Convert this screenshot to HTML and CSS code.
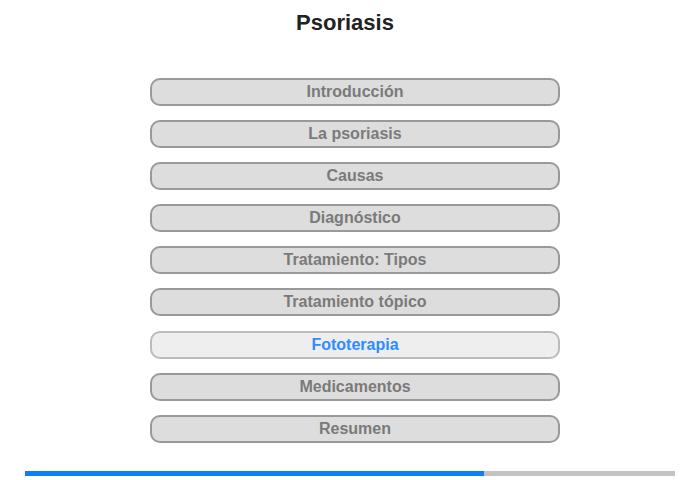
FILE: index.html
```html
<!DOCTYPE html>
<html lang="es">
<head>
<meta charset="utf-8">
<title>Psoriasis</title>
<link rel="stylesheet" href="styles.css">
</head>
<body>
<div class="page">
  <h1 class="title">Psoriasis</h1>
  <nav class="menu">
    <div class="item">Introducción</div>
    <div class="item">La psoriasis</div>
    <div class="item">Causas</div>
    <div class="item">Diagnóstico</div>
    <div class="item">Tratamiento: Tipos</div>
    <div class="item">Tratamiento tópico</div>
    <div class="item active">Fototerapia</div>
    <div class="item">Medicamentos</div>
    <div class="item">Resumen</div>
  </nav>
  <div class="progress"><div class="progress-fill" style="width:70.6%"></div></div>
</div>
</body>
</html>
```
FILE: styles.css
```css
html, body {
  margin: 0;
  padding: 0;
  background: #fff;
}
.page {
  width: 700px;
  height: 480px;
  font-family: "Liberation Sans", Arial, sans-serif;
  display: flex;
  flex-direction: column;
}
.title {
  margin: 0;
  padding: 10px 10px 0 0;
  font-size: 22px;
  line-height: 26px;
  font-weight: bold;
  color: #222;
  text-align: center;
}
.menu {
  margin: 42px 0 0 150px;
  width: 410px;
  display: flex;
  flex-direction: column;
  gap: 14.1px;
}
.item {
  box-sizing: border-box;
  height: 28px;
  border: 2px solid #999;
  border-radius: 10px;
  background: #ddd;
  color: #7a7a7a;
  font-size: 16px;
  font-weight: bold;
  line-height: 24px;
  text-align: center;
}
.item.active {
  background: #eee;
  border-color: #bbb;
  color: #2d8cff;
}
.progress {
  margin: 28px 0 0 25px;
  width: 650px;
  height: 5px;
  background: #c3c3c3;
}
.progress-fill {
  height: 100%;
  background: #0a7ffa;
}
```
